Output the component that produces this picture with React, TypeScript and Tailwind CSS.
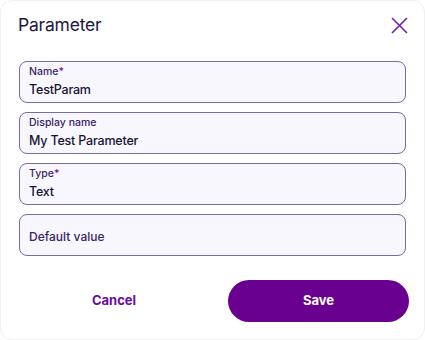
import React from 'react'

interface IFieldProps {
  label?: string
  required?: boolean
  value?: string
  placeholder?: string
}

function Field({ label, required, value, placeholder }: IFieldProps) {
  if (!label) {
    return (
      <div className="h-[42px] flex items-center rounded-lg border border-[#7b6aa8] bg-[#f7f7fd] px-[9px] pt-[3px]">
        <span className="text-[12px] font-medium text-[#3a2466]">{placeholder}</span>
      </div>
    )
  }

  return (
    <div className="h-[42px] flex flex-col rounded-lg border border-[#7b6aa8] bg-[#f7f7fd] px-[9px] pt-[3px]">
      <span className="text-[10.5px] leading-[14px] font-medium text-[#3a2466]">
        {label}
        {required && <span className="text-[#7b119e]">*</span>}
      </span>
      <span className="text-[12.5px] leading-[22px] font-medium tracking-[-0.2px] text-[#1a1433]">
        {value}
      </span>
    </div>
  )
}

export default function App() {
  return (
    <div className="w-[425px] h-[340px] bg-white font-['Inter',sans-serif]">
      <div className="w-full h-full flex flex-col rounded-xl border border-[#f0f0f0] bg-white">
        <div className="flex items-center justify-between pl-[17px] pr-[16px] h-[48px]">
          <h2 className="text-[17.5px] tracking-[-0.2px] text-[#1d1640]">Parameter</h2>
          <button className="w-[18px] h-[18px] flex items-center justify-center text-[#7b1fa8]">
            <svg width="17" height="17" viewBox="0 0 17 17" fill="none">
              <path d="M1 1L16 16M16 1L1 16" stroke="currentColor" strokeWidth="1.6" />
            </svg>
          </button>
        </div>

        <div className="flex flex-col gap-[9px] px-[18px] pt-[12px]">
          <Field label="Name" required value="TestParam" />
          <Field label="Display name" value="My Test Parameter" />
          <Field label="Type" required value="Text" />
          <Field placeholder="Default value" />
        </div>

        <div className="flex items-center pl-[18px] pt-[24px]">
          <button className="w-[190px] h-[42px] text-[13px] font-bold text-[#6b0b9c]">Cancel</button>
          <button className="ml-[19px] w-[181px] h-[42px] rounded-full bg-[#69008f] text-[13px] font-bold text-white">
            Save
          </button>
        </div>
      </div>
    </div>
  )
}
